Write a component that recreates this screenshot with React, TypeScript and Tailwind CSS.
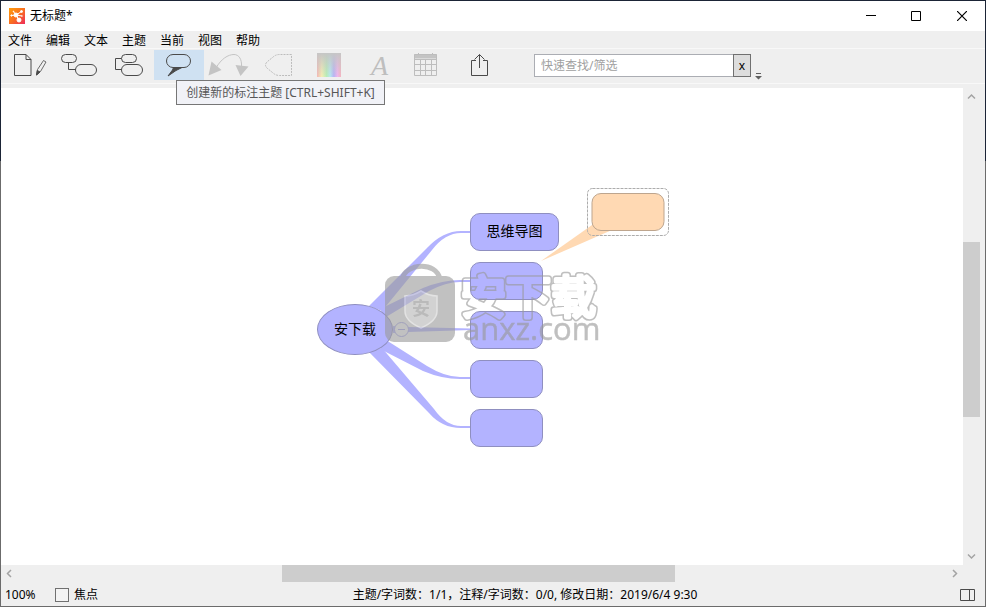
import type { ReactNode } from "react";

const menus = ["文件", "编辑", "文本", "主题", "当前", "视图", "帮助"];

function Tool({ label, active, children }: { label: string; active?: boolean; children: ReactNode }) {
  return (
    <button
      type="button"
      aria-label={label}
      className={active ? "h-[30px] w-[50px] shrink-0 bg-[#cfe1f2]" : "h-[30px] w-[50px] shrink-0"}
    >
      <svg viewBox="0 0 50 30" width="50" height="30" fill="none" stroke="#4a4a4a" className="overflow-visible">
        {children}
      </svg>
    </button>
  );
}

function Logo() {
  return (
    <svg width="16" height="16" viewBox="0 0 16 16">
      <defs>
        <linearGradient id="logo" x1="0" y1="0" x2="1" y2="1">
          <stop offset="0" stopColor="#ff9d0a" />
          <stop offset="0.5" stopColor="#f9701f" />
          <stop offset="1" stopColor="#ee2a5c" />
        </linearGradient>
      </defs>
      <rect width="16" height="16" fill="url(#logo)" />
      <g stroke="#fff" strokeWidth="1" fill="#fff">
        <path d="M2.5 7.5 7 7 12.5 3.5M4.5 3.5 7 7l3 5M7 7l6 1" fill="none" />
        <circle cx="7" cy="7" r="2" />
        <circle cx="10" cy="12" r="2" />
        <circle cx="12.5" cy="3.5" r="1" />
        <circle cx="2.5" cy="7.5" r="0.7" />
        <circle cx="4.5" cy="3.5" r="0.4" />
        <circle cx="13" cy="8" r="0.3" />
      </g>
    </svg>
  );
}

function TitleBar() {
  return (
    <header className="flex h-[30px] items-center bg-white pl-2">
      <Logo />
      <h1 className="ml-[5px] flex-1 text-xs">无标题*</h1>
      <button type="button" aria-label="最小化" className="flex h-full w-[45px] items-center justify-center">
        <svg width="10" height="10" stroke="#000" fill="none"><path d="M0 4.5h10" /></svg>
      </button>
      <button type="button" aria-label="最大化" className="flex h-full w-[46px] items-center justify-center">
        <svg width="10" height="10" stroke="#000" fill="none"><path d="M.5.5h9v9h-9z" /></svg>
      </button>
      <button type="button" aria-label="关闭" className="flex h-full w-[46px] items-center justify-center">
        <svg width="10" height="10" stroke="#000" strokeWidth="1.200" fill="none"><path d="m0 0 10 10M10 0 0 10" /></svg>
      </button>
    </header>
  );
}

function Toolbar() {
  return (
    <div className="relative flex h-[35px] items-start border-b border-[#f8f8f8] pl-[3px] pt-px">
      <Tool label="新建">
        <path d="M10.5 4.5h11.500l5 5v16H10.500zM22 4.500v5h5" />
        <path d="m32.500 25 1-5.500 6-9 2.500 1.500-5.500 9.500z" strokeWidth="0.800" />
        <path d="m32.500 25 .800-4.500 2.700 1.500z" fill="#4a4a4a" />
      </Tool>
      <Tool label="子主题">
        <rect x="7.5" y="4.5" width="15" height="8" rx="4" />
        <path d="M14.5 12.5v7h7" />
        <rect x="21.5" y="14.5" width="21" height="11" rx="5.5" />
      </Tool>
      <Tool label="同级主题">
        <rect x="17.5" y="4.5" width="15" height="8" rx="4" />
        <rect x="17.5" y="14.5" width="21" height="11" rx="5.5" />
        <path d="M17.5 8.5h-6v11h6" />
      </Tool>
      <Tool label="标注主题" active>
        <rect x="12.5" y="4.5" width="24" height="13" rx="6.5" />
        <path d="M19.500 17.500 18.500 20 14 26 22 20.500 28 17.500z" fill="#4a4a4a" />
      </Tool>
      <Tool label="关系">
        <path d="M12 18C17 9 24 4.500 30 4.500c5 0 8 5 7.500 12" stroke="#c4c4c4" />
        <path d="M7.500 11.500 17.500 20 4.500 25.500zM31.500 15l13 1.500L36.500 26z" fill="#c4c4c4" stroke="none" />
      </Tool>
      <Tool label="外框">
        <path d="M37.500 4.500h-12q-4 0-7 3l-5 4q-4 3.500 0 7l5 4q3 3 7 3h12z" stroke="#bcbcbc" strokeDasharray="2 1" />
      </Tool>
      <Tool label="颜色">
        <defs>
          <linearGradient id="hue">
            <stop offset="0" stopColor="#f3b5b5" />
            <stop offset="0.200" stopColor="#f5efb4" />
            <stop offset="0.400" stopColor="#b7eeb5" />
            <stop offset="0.550" stopColor="#b5e9f1" />
            <stop offset="0.700" stopColor="#b7b3f5" />
            <stop offset="0.850" stopColor="#efb5ee" />
            <stop offset="1" stopColor="#f4b5bc" />
          </linearGradient>
          <linearGradient id="fade" x2="0" y2="1">
            <stop offset="0" stopColor="#c6c6c6" />
            <stop offset="1" stopColor="#c6c6c6" stopOpacity="0" />
          </linearGradient>
        </defs>
        <rect x="13" y="3" width="24" height="24" fill="url(#hue)" stroke="none" />
        <rect x="13" y="3" width="24" height="24" fill="url(#fade)" stroke="none" />
      </Tool>
      <Tool label="字体">
        <text x="17" y="25" fontSize="28" fontStyle="italic" fill="#bebebe" stroke="none" className="font-['Liberation_Serif',serif]">A</text>
      </Tool>
      <Tool label="表格">
        <path d="M10 4.500h23v4H10z" fill="#c4c4c4" stroke="none" />
        <path d="M10.500 4.500h22v21h-22zM10 9.500h23M10 14.500h23M10 20.500h23M16.500 9v17M21.500 9v17M27.500 9v17M14.500 3v2M28.500 3v2" stroke="#bdbdbd" />
      </Tool>
      <Tool label="共享">
        <path d="M22 10.500h-4.500v15h16v-15H29M25.500 18V4.500M20.500 9.500l5-5 5 5" />
      </Tool>
      <div className="ml-[30px] mt-1 flex h-[23px] w-[217px]">
        <input
          aria-label="快速查找/筛选"
          placeholder="快速查找/筛选"
          className="min-w-0 flex-1 border border-r-0 border-[#abadb3] bg-white px-[6px] text-xs text-black outline-none placeholder:text-[#a0a0a0]"
        />
        <button type="button" aria-label="清除" className="w-[18px] border border-[#707070] bg-[#dddddd] text-xs leading-5">x</button>
      </div>
      <button type="button" aria-label="更多工具" className="ml-1 mt-[22px]">
        <svg width="7" height="8"><path d="M1 1h5v1H1zM0 4h7L3.500 7.500z" fill="#606060" /></svg>
      </button>
      <div role="tooltip" className="absolute left-[175px] top-[31px] z-10 flex h-[25px] w-[209px] items-center justify-center whitespace-nowrap border border-[#767676] bg-[#f1f2f7] text-xs text-[#575757]">
        创建新的标注主题 [CTRL+SHIFT+K]
      </div>
    </div>
  );
}

const nodeClass = "h-[38px] rounded-[10px] border border-[#8f8fc0] bg-[#b3b3ff]";

function Watermark() {
  return (
    <svg viewBox="1 88 962 477" width="962" height="477" className="pointer-events-none absolute left-0 top-0">
      <defs>
        <mask id="outline" maskUnits="userSpaceOnUse" x="450" y="260" width="160" height="80">
          <g fontSize="45" fontWeight="400" strokeLinejoin="round" className="font-['Noto_Sans_CJK_SC',sans-serif]">
            <text x="461" y="314" fill="#fff" stroke="#fff" strokeWidth="7">安下载</text>
            <text x="461" y="314" fill="#000" stroke="#000" strokeWidth="4">安下载</text>
          </g>
        </mask>
      </defs>
      <g opacity="0.620">
        <path d="M402 279c4-16 34-18 38 0" fill="none" stroke="#9c9c9c" strokeWidth="5" />
        <rect x="385" y="276" width="70" height="66" rx="9" fill="#9c9c9c" />
        <path d="M421 291q8 5 16 5v15q0 10-16 17-16-7-16-17v-15q8 0 16-5z" fill="#b8b8b8" stroke="#d2d2d2" strokeWidth="1.500" />
        <text x="412" y="315" fontSize="18" fontWeight="700" fill="#909090" className="font-['Noto_Sans_CJK_SC',sans-serif]">安</text>
        <rect x="450" y="260" width="160" height="80" fill="#999" mask="url(#outline)" />
        <text x="463" y="340" fontSize="31" fill="#999" stroke="#999" strokeWidth="0.500" className="font-['Open_Sans',sans-serif]">anxz.com</text>
      </g>
    </svg>
  );
}

function MindMap() {
  return (
    <main className="relative min-w-0 flex-1 overflow-hidden bg-white">
      <svg viewBox="1 88 962 477" width="962" height="477" className="absolute left-0 top-0">
        <g fill="#b3b3ff">
          <path d="M369 306 427 248Q443 231 461 231h10v2h-10q-16 0-29 17L382 311z" />
          <path d="M380 309 423 288Q443 280 460 280h11v2h-11q-14 0-31 9L386 317z" />
          <path d="M393 326l15 1 63 1.500v1.500l-63 2-15 1z" />
          <path d="M386 340 427 366q18 11 33 11h11v2h-11q-18 0-37-8L380 349z" />
          <path d="M382 348 434 409q12 17 27 17h10v2h-10q-19 0-32-15L369 352z" />
        </g>
        <path d="M541 261 592 225 612 230z" fill="#ffd9b3" />
      </svg>
      <div className="absolute left-[316px] top-[216px] flex h-[51px] w-[76px] items-center justify-center rounded-[50%] border border-[#8f8fc0] bg-[#b3b3ff] pb-0.5 text-sm">安下载</div>
      <button type="button" aria-label="折叠" className="absolute left-[393px] top-[234px]">
        <svg width="15" height="15" fill="#fff" stroke="#a6a6ee"><circle cx="7.500" cy="7.500" r="7" /><path d="M4 7.500h7" /></svg>
      </button>
      <div className="absolute left-[469px] top-[125px] flex flex-col items-start gap-[11px]">
        <div className={`${nodeClass} flex w-[89px] items-center justify-center pb-0.5 text-sm`}>思维导图</div>
        <div className={`${nodeClass} w-[73px]`} />
        <div className={`${nodeClass} w-[73px]`} />
        <div className={`${nodeClass} w-[73px]`} />
        <div className={`${nodeClass} w-[73px]`} />
      </div>
      <svg viewBox="0 0 83 48" width="83" height="48" className="absolute left-[585px] top-[100px]" fill="none">
        <rect x="1.500" y="0.500" width="81" height="47" rx="5" stroke="#acacac" strokeDasharray="3 1" />
        <rect x="6" y="5.500" width="72" height="37" rx="9" fill="#ffd9b3" stroke="#bda58e" />
      </svg>
      <Watermark />
    </main>
  );
}

function Arrow({ label, d, className }: { label: string; d: string; className: string }) {
  return (
    <button type="button" aria-label={label} className={`flex shrink-0 items-center justify-center ${className}`}>
      <svg width="9" height="9" viewBox="0 0 9 9" fill="none" stroke="#a3a3a3" strokeWidth="1.500"><path d={d} /></svg>
    </button>
  );
}

export default function App() {
  return (
    <div className="flex h-screen flex-col bg-[linear-gradient(to_bottom,#1b2436_161px,#6b6b6b_161px)] p-px font-['Noto_Sans','Noto_Sans_CJK_SC',sans-serif] text-black">
      <TitleBar />
      <div className="flex min-h-0 flex-1 flex-col bg-[#efefef]">
        <nav className="flex h-[18px] items-center gap-[14px] border-b border-[#f8f8f8] pl-[7px] pt-0.5 text-xs">
          {menus.map((m) => (
            <button type="button" key={m}>{m}</button>
          ))}
        </nav>
        <Toolbar />
        <div className="mt-1 flex min-h-0 flex-1">
          <MindMap />
          <div className="flex w-[22px] flex-col pr-[5px]">
            <Arrow label="向上滚动" d="m1 6.500 3.500-3.500L8 6.500" className="h-[17px]" />
            <div className="grow-[137]" />
            <div className="grow-[175] bg-[#cdcdcd]" />
            <div className="grow-[131]" />
            <Arrow label="向下滚动" d="m1 2.500 3.500 3.500L8 2.500" className="h-[17px]" />
          </div>
        </div>
        <div className="mr-[22px] flex h-[17px]">
          <Arrow label="向左滚动" d="M6 1 2.500 4.500 6 8" className="w-[17px]" />
          <div className="grow-[264]" />
          <div className="grow-[393] bg-[#cdcdcd]" />
          <div className="grow-[271]" />
          <Arrow label="向右滚动" d="m3 1 3.500 3.500L3 8" className="w-[17px]" />
        </div>
        <footer className="flex h-6 items-center pl-1 pr-[10px] pt-px text-xs">
          <span className="w-[50px]">100%</span>
          <label className="flex items-center gap-[5px]">
            <input type="checkbox" className="size-[14px] appearance-none border border-[#707070] bg-[#f3f3f3]" />
            焦点
          </label>
          <p className="flex-1 pr-2 text-center">主题/字词数：1/1，注释/字词数：0/0, 修改日期：2019/6/4 9:30</p>
          <button type="button" aria-label="侧边栏">
            <svg width="15" height="12" fill="none" stroke="#4a4a4a"><path d="M.5.5h14v11H.5zM9.500.5v11" /></svg>
          </button>
        </footer>
      </div>
    </div>
  );
}
